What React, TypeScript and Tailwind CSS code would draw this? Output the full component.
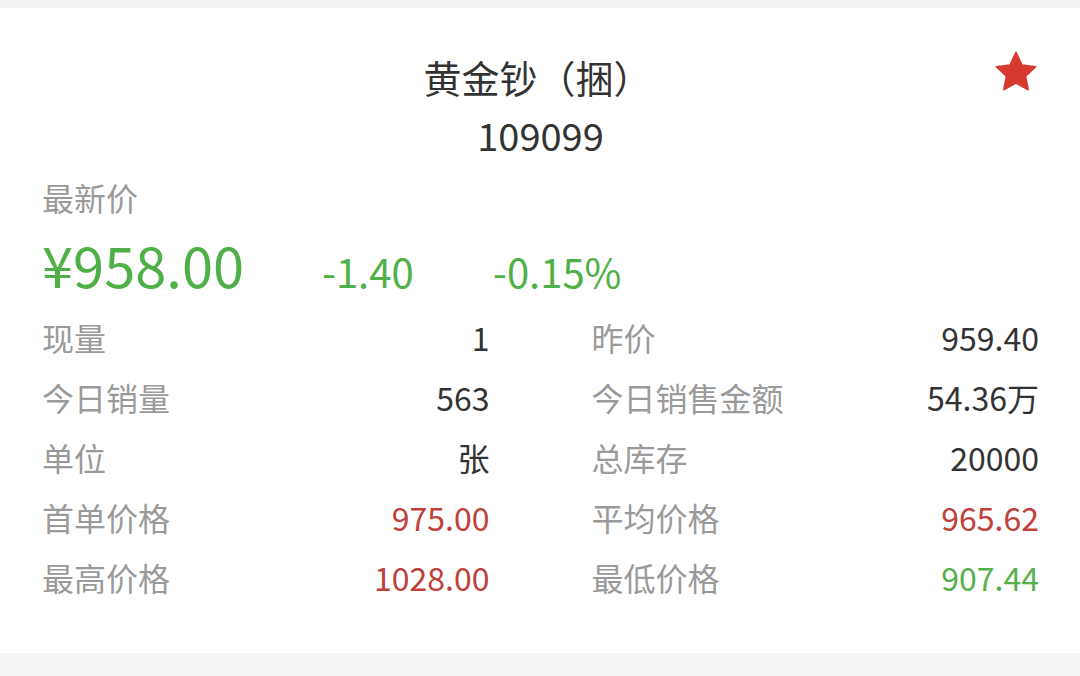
import React from 'react';

const font = { fontFamily: '"Noto Sans CJK SC", "Noto Sans", sans-serif' };

type Cell = { label: string; value: string; tone?: 'dark' | 'red' | 'green' };

const rows: [Cell, Cell][] = [
  [{ label: '现量', value: '1' }, { label: '昨价', value: '959.40' }],
  [{ label: '今日销量', value: '563' }, { label: '今日销售金额', value: '54.36万' }],
  [{ label: '单位', value: '张' }, { label: '总库存', value: '20000' }],
  [{ label: '首单价格', value: '975.00', tone: 'red' }, { label: '平均价格', value: '965.62', tone: 'red' }],
  [{ label: '最高价格', value: '1028.00', tone: 'red' }, { label: '最低价格', value: '907.44', tone: 'green' }],
];

const toneClass = {
  dark: 'text-[#333333]',
  red: 'text-[#c0403a]',
  green: 'text-[#55b04a]',
};

const Star = () => (
  <svg width="46" height="44" viewBox="0 0 24 23" className="text-[#d63a2f]">
    <path
      fill="currentColor"
      d="M12 1.2l3.1 6.6 7.2.9-5.3 5 1.4 7.1L12 17.3l-6.4 3.5L7 13.7l-5.3-5 7.2-.9z"
      strokeLinejoin="round"
      stroke="currentColor"
      strokeWidth="0.8"
    />
  </svg>
);

const InfoCell: React.FC<{ cell: Cell }> = ({ cell }) => (
  <div className="flex items-center justify-between h-[60px]">
    <span className="text-[32px] text-[#9a9a9a]">{cell.label}</span>
    <span className={`text-[32px] ${toneClass[cell.tone ?? 'dark']}`}>{cell.value}</span>
  </div>
);

export default function App() {
  return (
    <div className="w-[1080px] h-[676px] bg-white flex flex-col overflow-hidden" style={font}>
      <div className="h-[8px] bg-[#f3f3f3]" />
      <div className="flex-1 px-[42px] pr-[41px]">
        {/* Header */}
        <div className="relative flex flex-col items-center pt-[43px]">
          <div className="text-[38px] leading-[52px] text-[#333333] pr-[6px]">黄金钞（捆）</div>
          <div className="text-[38px] leading-[52px] text-[#333333] mt-[6px]">109099</div>
          <div className="absolute right-[0px] top-[42px]">
            <Star />
          </div>
        </div>

        <div className="text-[32px] leading-[44px] text-[#9a9a9a] mt-[14px]">最新价</div>

        <div className="flex items-baseline mt-[14px] h-[62px]">
          <span className="text-[56px] leading-[62px] text-[#4fb048] w-[280px]">¥958.00</span>
          <span className="text-[40px] text-[#4fb048] w-[171px]">-1.40</span>
          <span className="text-[40px] text-[#4fb048]">-0.15%</span>
        </div>

        <div className="grid grid-cols-2 gap-x-[102px] mt-[12px]">
          {rows.map(([l, r], i) => (
            <React.Fragment key={i}>
              <InfoCell cell={l} />
              <InfoCell cell={r} />
            </React.Fragment>
          ))}
        </div>
      </div>
      <div className="h-[23px] bg-[#f5f5f5]" />
    </div>
  );
}
